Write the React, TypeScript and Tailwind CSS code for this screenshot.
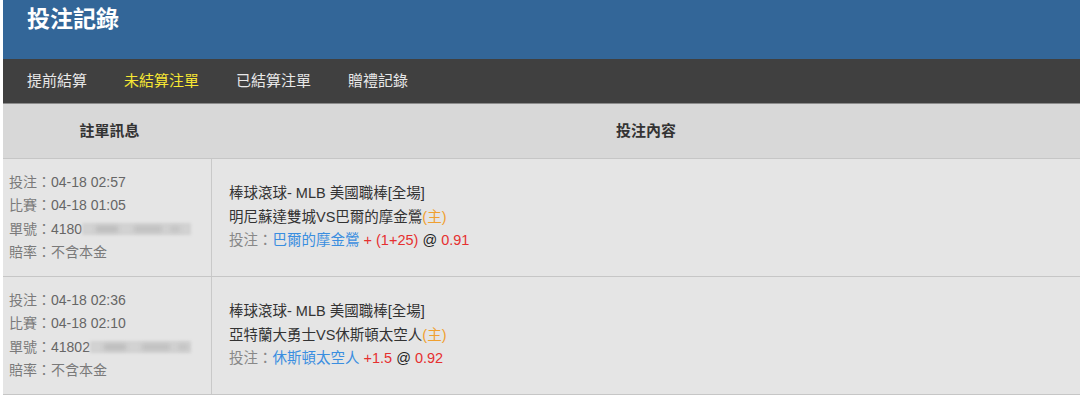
import React from "react";

const FONT = { fontFamily: '"Liberation Sans", Arial, "Noto Sans CJK TC", sans-serif' };

type Bet = {
  placed: string;
  match: string;
  idPrefix: string;
  blurWidth: number;
  line1: string;
  teams: string;
  pick: string;
  handicap: string;
  odds: string;
};

const bets: Bet[] = [
  {
    placed: "04-18 02:57",
    match: "04-18 01:05",
    idPrefix: "4180",
    blurWidth: 109,
    line1: "棒球滾球- MLB 美國職棒[全場]",
    teams: "明尼蘇達雙城VS巴爾的摩金鶯",
    pick: "巴爾的摩金鶯",
    handicap: "+ (1+25)",
    odds: "0.91",
  },
  {
    placed: "04-18 02:36",
    match: "04-18 02:10",
    idPrefix: "41802",
    blurWidth: 101,
    line1: "棒球滾球- MLB 美國職棒[全場]",
    teams: "亞特蘭大勇士VS休斯頓太空人",
    pick: "休斯頓太空人",
    handicap: "+1.5",
    odds: "0.92",
  },
];

function Blur({ width }: { width: number }) {
  return (
    <span className="relative inline-block h-[14px] shrink-0" style={{ width }}>
      <span className="absolute inset-x-0 top-[1px] h-[12px] bg-[#d2d2d2] blur-[1.5px]" />
      <span className="absolute left-[14px] top-[4px] h-[6px] w-[22px] bg-[#bcbcbc] blur-[2px]" />
      <span className="absolute left-[52px] top-[4px] h-[6px] w-[28px] bg-[#c0c0c0] blur-[2px]" />
      <span className="absolute left-[88px] top-[4px] h-[6px] w-[10px] bg-[#c4c4c4] blur-[2px]" />
    </span>
  );
}

function Row({ bet }: { bet: Bet }) {
  return (
    <div className="flex h-[118px] border-b border-[#c6c6c6] bg-[#e5e5e5]">
      <div className="flex w-[209px] shrink-0 flex-col justify-center whitespace-nowrap border-r border-[#c9c9c9] pl-[6px] text-[14px] leading-[23.5px] text-[#7a7a7a]">
        <div>
          投注：<span className="text-[#666]">{bet.placed}</span>
        </div>
        <div>
          比賽：<span className="text-[#666]">{bet.match}</span>
        </div>
        <div className="flex items-center">
          <span className="shrink-0">單號：</span>
          <span className="shrink-0 text-[#666]">{bet.idPrefix}</span>
          <Blur width={bet.blurWidth} />
        </div>
        <div>賠率：不含本金</div>
      </div>
      <div className="flex flex-1 flex-col justify-center whitespace-nowrap pl-[17px] text-[14.5px] leading-[23.5px] text-[#333]">
        <div>{bet.line1}</div>
        <div>
          {bet.teams}
          <span className="text-[#f0a030]">(主)</span>
        </div>
        <div>
          <span className="text-[#888]">投注：</span>
          <span className="text-[#3a8ee0]">{bet.pick}</span>{" "}
          <span className="text-[#e53030]">{bet.handicap}</span>{" "}
          <span className="text-[#222]">@</span>{" "}
          <span className="text-[#e53030]">{bet.odds}</span>
        </div>
      </div>
    </div>
  );
}

export default function App() {
  return (
    <div className="h-[409px] w-[1080px] overflow-hidden bg-white pl-[3px]" style={FONT}>
      <div className="h-[59px] bg-[#336698] pl-[24px] pt-[3px]">
        <h1 className="text-[23px] font-bold leading-[32px] text-white">投注記錄</h1>
      </div>
      <nav className="flex h-[45px] items-center gap-[37px] border-b border-[#8c8c8c] bg-[#404040] pl-[24px] text-[15px] text-[#e8e8e8]">
        <span>提前結算</span>
        <span className="text-[#f7e733]">未結算注單</span>
        <span>已結算注單</span>
        <span>贈禮記錄</span>
      </nav>
      <div className="flex h-[55px] border-b border-[#c6c6c6] bg-[#d8d8d8] text-[15px] font-bold text-[#333]">
        <div className="flex w-[209px] shrink-0 items-center justify-center pl-[4px]">註單訊息</div>
        <div className="flex flex-1 items-center justify-center">投注內容</div>
      </div>
      {bets.map((b, i) => (
        <Row key={i} bet={b} />
      ))}
    </div>
  );
}
